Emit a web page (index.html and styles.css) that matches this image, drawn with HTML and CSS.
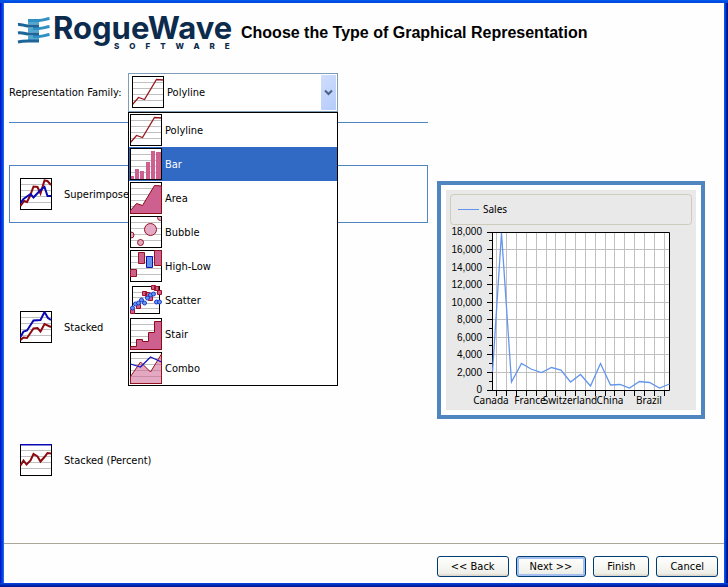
FILE: index.html
```html
<!DOCTYPE html>
<html lang="en">
<head>
<meta charset="utf-8">
<title>Chart Wizard</title>
<link rel="stylesheet" href="styles.css">
</head>
<body>
<svg class="defs" aria-hidden="true">
  <symbol id="base" viewBox="0 0 32 32">
    <rect width="32" height="32" fill="#fff"/>
    <path d="M0 6.5H32M0 12.5H32M0 18.5H32M0 24.5H32" stroke="#c0c0c0"/>
  </symbol>
  <symbol id="frame" viewBox="0 0 32 32"><rect x=".5" y=".5" width="31" height="31" fill="none" stroke="#000"/></symbol>
  <symbol id="polyline" viewBox="0 0 32 32">
    <use href="#base"/><path d="M.5 28.5L6.5 21.5L12.5 23.5L24.5 3.5L31.5 4" fill="none" stroke="#981820" stroke-width="1.3"/><use href="#frame"/>
  </symbol>
  <symbol id="bar" viewBox="0 0 32 32">
    <use href="#base"/><path d="M0 28h4v4h-4zM5 21h4v11h-4zM10 23h4v9h-4zM16 14h4v18h-4zM21 3h4v29h-4zM26 4h5v28h-5z" fill="#ce6090"/><use href="#frame"/>
  </symbol>
  <symbol id="area" viewBox="0 0 32 32">
    <use href="#base"/><use href="#frame"/><path d="M.5 31.5V28.5L6.5 21.5L12.5 23.5L24.5 3.5L31.5 4V31.5z" fill="#ce6090" stroke="#8c0a18"/>
  </symbol>
  <symbol id="bubble" viewBox="0 0 32 32">
    <use href="#base"/><g fill="#e3a9c5" stroke="#941420"><circle cx="20.5" cy="13.5" r="6"/><circle cx="10.5" cy="26.5" r="3"/><circle cx="1" cy="19" r="3"/><circle cx="30.5" cy="1.5" r="3"/></g><use href="#frame"/>
  </symbol>
  <symbol id="highlow" viewBox="0 0 32 32">
    <use href="#base"/><use href="#frame"/><g fill="#ce6090" stroke="#941420"><path d="M.5 19.5h6v7h-6zM8.5 2.5h6v11h-6zM24.5.5h7v15h-7z"/><path d="M16.5 6.5h6v11h-6z" fill="#6495ed" stroke="#1010b0"/></g>
  </symbol>
  <symbol id="scatter" viewBox="0 0 32 32">
    <rect x="2.5" y="2.5" width="27" height="27" fill="#fff" stroke="#000"/><path d="M3 8.5H29M3 13.5H29M3 19.5H29M3 24.5H29" stroke="#c0c0c0"/>
    <path d="M21.5 1.5h4v4h-4zM24.5 2.5h4v4h-4zM27.5 6.5h4v4h-4zM12.5 7.5h4v4h-4zM15.5 8.5h4v4h-4zM18.5 12.5h4v4h-4zM6.5 20.5h4v4h-4zM.5 25.5h4v4h-4z" fill="#ce6090" stroke="#a01028"/>
    <g fill="#6495ed" stroke="#1c3cc8"><circle cx="2.5" cy="24" r="2"/><circle cx="5.5" cy="20" r="2"/><circle cx="8.5" cy="19" r="2"/><circle cx="11.5" cy="16" r="2"/><circle cx="14.5" cy="19" r="2"/><circle cx="17.5" cy="14" r="2"/><circle cx="20.5" cy="11" r="2"/><circle cx="23.5" cy="10" r="2"/><circle cx="26.5" cy="18" r="2"/><circle cx="29.5" cy="18" r="2"/></g>
  </symbol>
  <symbol id="stair" viewBox="0 0 32 32">
    <use href="#base"/><use href="#frame"/><path d="M.5 31.5V28.5H6.5V21.5H12.5V23.5H18.5V14.5H24.5V3.5H31.5V31.5z" fill="#ce6090" stroke="#8c0a18"/>
  </symbol>
  <symbol id="combo" viewBox="0 0 32 32">
    <use href="#base"/><path d="M.5 31.5V24.5L10.5 10L20.5 20L31.5 2V31.5z" fill="#ce6090" fill-opacity=".55"/><use href="#frame"/><path d="M31.5 31.5H.5V24.5L10.5 10L20.5 20L31.5 2z" fill="none" stroke="#941420"/><path d="M.5 12L10.5 15L20.5 5L31.5 10" fill="none" stroke="#1414c0" stroke-width="1.3"/>
  </symbol>
  <symbol id="superimposed" viewBox="0 0 32 32">
    <use href="#base"/><use href="#frame"/>
    <g fill="none" stroke-width="2"><path d="M.5 28L4 23L7 24L10 18L13.5 8.5L17.5 9L20.5 15.5L24.5 2.5L27.5 3L31 7" stroke="#8c0a10"/><path d="M.5 25L3.5 21L10.5 16L13.5 19.5L20.5 12L24.5 9L27.5 18H31" stroke="#0808b4"/></g>
  </symbol>
  <symbol id="stacked" viewBox="0 0 32 32">
    <use href="#base"/><use href="#frame"/>
    <g fill="none" stroke-width="2"><path d="M.5 26L3.5 20.5L7 19.5L13.5 9.5L20.5 9L24.5 1L28 7L31 9" stroke="#0808b4"/><path d="M.5 29L3.5 26.5L7 27L13.5 17.5L17.5 17L20.5 20.5L24.5 13L31 16" stroke="#8c0a10"/></g>
  </symbol>
  <symbol id="percent" viewBox="0 0 32 32">
    <use href="#base"/><use href="#frame"/><path d="M0 .5H32" stroke="#0808b4" stroke-width="2"/>
    <path d="M.5 21.5L3.5 16.5L6.5 20.5L10.5 16.5L13.5 10L17.5 12.5L20.5 17.5L24.5 13L27.5 9L31 9.5" fill="none" stroke="#8c0a10" stroke-width="2"/>
  </symbol>
</svg>

<div class="window">
  <header class="banner">
    <svg class="logo" width="223" height="46" viewBox="18 10 223 46" role="img" aria-label="RogueWave Software">
      <g fill="none">
        <path d="M28 22H39M28 30H39M28 38H39" stroke="#54a8d0" stroke-width="5"/>
        <path d="M28 20.5H39C43 20.5 46 19 49.500 18.500M33 28.5H39C43 28.5 46 27 49.500 26.500M33 36.500H39C43 36.500 46 35 49.500 34.500" stroke="#3090c4" stroke-width="3"/>
        <path d="M18 24.500C22 24 24 26 28 26H39M18 33C22 32 24 34 28 34H39M18 42C22 41 24 41 28 41H39" stroke="#1d6499" stroke-width="3"/>
      </g>
      <text class="logo-name" x="53" y="39">RogueWave</text>
      <text class="logo-sub" x="114" y="49">SOFTWARE</text>
    </svg>
    <h1>Choose the Type of Graphical Representation</h1>
  </header>

  <main class="content">
    <form class="choices" id="choices">
      <div class="family">
        <label for="family">Representation Family:</label>
        <div class="combo">
          <svg class="icon combo-icon"><use href="#polyline"/></svg>
          <select id="family">
            <option>Polyline</option><option>Bar</option><option>Area</option><option>Bubble</option>
            <option>High-Low</option><option>Scatter</option><option>Stair</option><option>Combo</option>
          </select>
          <span class="arrow"><svg width="9" height="7" viewBox="0 0 9 7"><path d="M1 1.5L4.5 5L8 1.5" fill="none" stroke="#4d6185" stroke-width="2"/></svg></span>
          <ul class="menu" role="listbox" aria-label="Representation Family">
            <li role="option"><svg class="icon"><use href="#polyline"/></svg><span>Polyline</span></li>
            <li role="option" aria-selected="true" class="active"><svg class="icon"><use href="#bar"/></svg><span>Bar</span></li>
            <li role="option"><svg class="icon"><use href="#area"/></svg><span>Area</span></li>
            <li role="option"><svg class="icon"><use href="#bubble"/></svg><span>Bubble</span></li>
            <li role="option"><svg class="icon"><use href="#highlow"/></svg><span>High-Low</span></li>
            <li role="option"><svg class="icon"><use href="#scatter"/></svg><span>Scatter</span></li>
            <li role="option"><svg class="icon"><use href="#stair"/></svg><span>Stair</span></li>
            <li role="option"><svg class="icon"><use href="#combo"/></svg><span>Combo</span></li>
          </ul>
        </div>
      </div>
      <hr class="rule">
      <div class="modes" role="radiogroup" aria-label="Display mode">
        <label class="mode"><input type="radio" name="mode" checked><svg class="icon"><use href="#superimposed"/></svg><span>Superimposed</span></label>
        <label class="mode"><input type="radio" name="mode"><svg class="icon"><use href="#stacked"/></svg><span>Stacked</span></label>
        <label class="mode"><input type="radio" name="mode"><svg class="icon"><use href="#percent"/></svg><span>Stacked (Percent)</span></label>
      </div>
    </form>

    <figure class="preview">
      <svg class="chart" viewBox="446 190 250 220" role="img" aria-label="Sales by country">
        <rect x="450.5" y="194.5" width="241" height="30" rx="3" fill="none" stroke="#ceccba"/>
        <path d="M458 209.5H479" stroke="#6495ed"/>
        <text x="483" y="213">Sales</text>
        <rect x="492" y="232" width="177" height="158" fill="#fff"/>
        <path d="M496.5 232V390M506.5 232V390M516.5 232V390M526.5 232V390M536.5 232V390M546.5 232V390M555.5 232V390M565.5 232V390M575.5 232V390M585.5 232V390M595.5 232V390M605.5 232V390M614.5 232V390M624.5 232V390M634.5 232V390M644.5 232V390M654.5 232V390M664.5 232V390M492 249.5H669M492 267.5H669M492 284.5H669M492 302.5H669M492 319.5H669M492 337.5H669M492 354.5H669M492 372.5H669" stroke="#c0c0c0"/>
        <path d="M487 232.5H669.5V390.5H487M492.5 232V390M487 249.5H492M487 267.5H492M487 284.5H492M487 302.5H492M487 319.5H492M487 337.5H492M487 354.5H492M487 372.5H492M489 240.5H492M489 258.5H492M489 275.5H492M489 293.5H492M489 310.5H492M489 328.5H492M489 345.5H492M489 363.5H492M489 381.5H492" fill="none" stroke="#000"/>
        <path d="M496.5 390V396M506.5 390V396M516.5 390V396M526.5 390V396M536.5 390V396M546.5 390V396M555.5 390V396M565.5 390V396M575.5 390V396M585.5 390V396M595.5 390V396M605.5 390V396M614.5 390V396M624.5 390V396M634.5 390V396M644.5 390V396M654.5 390V396M664.5 390V396" stroke="#000"/>
        <path d="M492.5 372L501.5 233L511.5 382L521.5 363.5L531 369L541.5 372.5L551.5 367.5L561 370L570.5 382L580.5 374.5L590.5 386L600.5 363.5L610.5 385L620 384.5L629.5 388L639.5 381.5L649.5 382.5L659.5 388L669.5 384" fill="none" stroke="#6495ed" stroke-width="1.3"/>
        <g class="values">
          <text x="482" y="235">18,000</text><text x="482" y="253">16,000</text><text x="482" y="271">14,000</text><text x="482" y="288">12,000</text><text x="482" y="306">10,000</text><text x="482" y="323">8,000</text><text x="482" y="341">6,000</text><text x="482" y="358">4,000</text><text x="482" y="376">2,000</text><text x="482" y="393">0</text>
        </g>
        <g class="names">
          <text x="491" y="404">Canada</text><text x="530" y="404">France</text><text x="570" y="404">Switzerland</text><text x="610" y="404">China</text><text x="649" y="404">Brazil</text>
        </g>
      </svg>
    </figure>
  </main>

  <footer class="actions">
    <button type="button">&lt;&lt; Back</button>
    <button type="submit" form="choices" class="default">Next &gt;&gt;</button>
    <button type="button">Finish</button>
    <button type="button">Cancel</button>
  </footer>
</div>
</body>
</html>
```
FILE: styles.css
```css
* { box-sizing: border-box; }

body {
  margin: 0;
  font: 11px/14px "DejaVu Sans Condensed", "Noto Sans", sans-serif;
  color: #000;
}

.defs { position: absolute; width: 0; height: 0; }

.window {
  display: flex;
  flex-direction: column;
  min-height: 100vh;
  padding: 3px 4px 4px;
  background:
    linear-gradient(#0058ee, #0046d8) top / 100% 3px no-repeat,
    linear-gradient(#0844e0, #00138c) bottom / 100% 4px no-repeat,
    linear-gradient(90deg, #0019cf 1px, #0831d9 1px 2px, #0844e0 2px 3px, #166aee 3px) left / 4px 100% no-repeat,
    linear-gradient(90deg, #0855dd 1px, #0040e0 1px 2px, #001ea0 2px 3px, #00138c 3px) right / 4px 100% no-repeat,
    #fefefe;
}

.banner {
  display: flex;
  align-items: center;
  height: 60px;
  padding-left: 14px;
}
.logo { flex: none; overflow: visible; }
.logo-name { font: 700 31px Inter, sans-serif; fill: #0c2b4d; }
.logo-sub { font: 800 8px Inter, sans-serif; letter-spacing: 10px; fill: #0c2b4d; }
h1 {
  margin: 0;
  font: bold 16px/20px "Liberation Sans", Arial, sans-serif;
}

.content {
  flex: 1;
  display: grid;
  grid-template-columns: minmax(0, 1fr) 268px;
  gap: 9px;
  align-items: start;
  padding: 10px 19px 20px 5px;
}

.family { display: grid; grid-template-columns: 119px 210px; align-items: center; }
.combo { position: relative; display: grid; }
.combo select {
  appearance: none;
  height: 39px;
  padding: 0 20px 0 38px;
  border: 1px solid #7f9db9;
  border-radius: 0;
  background: #fff;
  color: #000;
  font: inherit;
}
.icon { display: block; flex: none; width: 32px; height: 32px; }
.combo-icon { position: absolute; top: 3px; left: 4px; }
.arrow {
  position: absolute;
  top: 2px;
  right: 2px;
  bottom: 2px;
  display: grid;
  place-items: center;
  width: 15px;
  border-radius: 1px;
  background: linear-gradient(135deg, #d0defc, #b4cbfa);
  pointer-events: none;
}
.menu {
  position: absolute;
  z-index: 1;
  top: 100%;
  left: 0;
  right: 0;
  margin: 0;
  padding: 0;
  border: 1px solid #000;
  background: #fff;
  list-style: none;
}
.menu li { display: flex; align-items: center; gap: 3px; height: 34px; padding: 0 1px; }
.menu span,
.mode span { padding-top: 2px; }
.menu .active { background: #316ac5; color: #fff; }

.rule { margin: 10px 0 42px; border: 0; border-top: 1px solid #4f86bf; }

.modes { display: grid; gap: 75px; }
.mode {
  display: flex;
  align-items: center;
  gap: 12px;
  padding: 12px 10px;
  border: 1px solid transparent;
}
.mode:has(:checked) { border-color: #4f86bf; }
.mode input { position: absolute; appearance: none; margin: 0; }

.preview {
  margin: 108px 0 0;
  padding: 5px;
  border: 4px solid #4f86bf;
  background: #fff;
}
.chart { display: block; width: 100%; background: #e9e9e9; font: 10px "Noto Sans", sans-serif; }
.values { font: 10px "Liberation Sans", Arial, sans-serif; text-anchor: end; }
.names { text-anchor: middle; }

.actions {
  display: flex;
  justify-content: flex-end;
  gap: 7px;
  padding: 12px 6px 6px;
  border-top: 1px solid #aca899;
}
.actions button {
  height: 21px;
  padding: 0 13px;
  border: 1px solid #003c74;
  border-radius: 3px;
  background: linear-gradient(#fff, #f0f0ea 85%, #d8d2c6);
  color: #000;
  font: inherit;
}
.actions .default { box-shadow: inset 0 0 0 2px #a4c0f0; }
```
